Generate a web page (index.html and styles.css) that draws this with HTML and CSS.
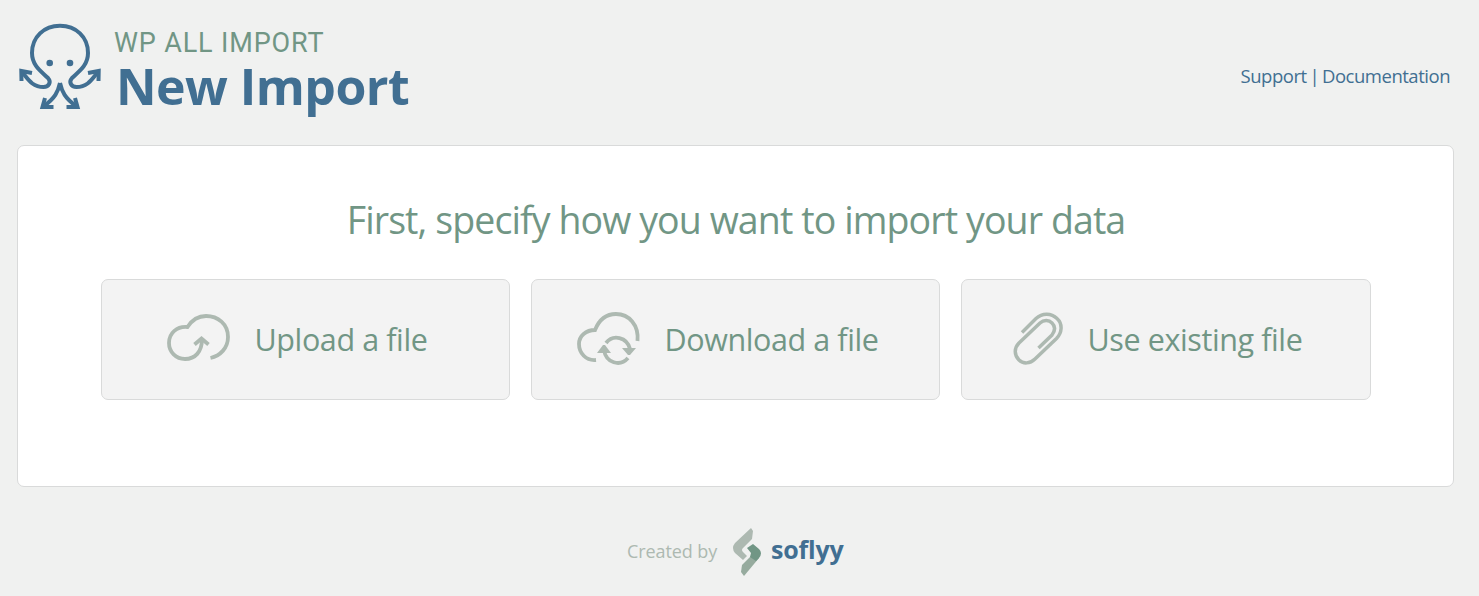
FILE: index.html
```html
<!DOCTYPE html>
<html lang="en">
<head>
<meta charset="utf-8">
<title>New Import</title>
<link rel="stylesheet" href="styles.css">
</head>
<body>
<header class="header">
  <svg class="logo" viewBox="0 0 84 90" fill="none" stroke="#416f92" stroke-width="4">
    <path d="M4 50C10 57 14 65 25.500 65C31 65 33.500 60 30 56C24 50 14 44 14 31C14 15 26 3.800 42 3.800C58 3.800 70 15 70 31C70 44 60 50 54 56C50.500 60 53 65 58.500 65C70 65 74 57 80 50"/>
    <path d="M3.500 59L3.300 49L14 51M70 51L80.700 49L80.500 59"/>
    <path d="M42 61C40 70 37 76 26 84M42 61C44 70 47 76 58 84"/>
    <path d="M27 76L24.500 85H35.500M57 76L59.500 85H48.500"/>
    <circle cx="31.700" cy="41" r="3.300" fill="#416f92" stroke="none"/>
    <circle cx="52" cy="41" r="3.300" fill="#416f92" stroke="none"/>
  </svg>
  <div class="titles">
    <div class="product">WP ALL IMPORT</div>
    <h1 class="title">New Import</h1>
  </div>
  <nav class="links"><a>Support</a> | <a>Documentation</a></nav>
</header>
<main class="card">
  <h2 class="heading">First, specify how you want to import your data</h2>
  <div class="options">
    <div class="option upload">
      <svg class="icon" width="64" height="54" viewBox="0 0 64 54" fill="none" stroke="#adb9b1" stroke-width="3.800">
        <path d="M43.500 46C53 44 61 36 61 25C61 12 51 4 39 4C31 4 25 8 20.500 15C10 14 2 21 2 31C2 40 9 47 18 47C28 47 35 40 35 27"/>
        <path d="M27.500 32.500L34.500 26.500L41.500 32.500"/>
      </svg>
      <span class="label">Upload a file</span>
    </div>
    <div class="option download">
      <svg class="icon" width="64" height="54" viewBox="0 0 64 54" fill="none" stroke="#adb9b1" stroke-width="3.800">
        <path d="M19 48C9 49 2 41 2 32C2 24 9 18 18 18C22 8 29 2 39 2C52 2 62 13 60.500 29"/>
        <path d="M29 31C36 22 50 25 53 37M51 46C43 55 29 51 27 38"/>
        <path d="M45 36H59L53 43H51ZM20 41H34L28 33H26Z" fill="#adb9b1" stroke="none"/>
      </svg>
      <span class="label">Download a file</span>
    </div>
    <div class="option existing">
      <svg class="icon" width="51" height="54" viewBox="0 0 51 54" fill="none" stroke="#adb9b1" stroke-width="3.500">
        <path d="M9 20.500L23 6.500C29 1 38 .500 44 6.500C50 12 49 21 43.500 26.500L22 47C17 52 10 52 6 48C1 43 1 36 6 31L27 11C31 7.500 36 8 39 11C43 15 42 19 39 23L25.500 36"/>
      </svg>
      <span class="label">Use existing file</span>
    </div>
  </div>
</main>
<footer class="footer">
  <span class="created">Created by</span>
  <svg class="mark" width="30" height="48" viewBox="0 0 30 48">
    <path fill="#adb9b1" d="M19 0L21 3L20 11L11 20Q9 22 11 24L15 28L11 32L3 25Q-1 20 3 15Z"/>
    <path fill="#96ab9e" d="M12 48L9 44L10 37L20 27L27 30Z"/>
    <path fill="#719685" d="M15 20L21 16L27 21Q31 25 27 30L24 33L18 29L19 25Z"/>
  </svg>
  <span class="brand">soflyy</span>
</footer>
</body>
</html>
```
FILE: styles.css
```css
* { box-sizing: border-box; }
body {
  margin: 0;
  height: 596px;
  overflow: hidden;
  background: #f0f1f0;
  font-family: "Open Sans", "Noto Sans", sans-serif;
  color: #719685;
}
h1, h2 { margin: 0; }
.header {
  display: flex;
  height: 145px;
  padding: 22px 29px 0 18px;
}
.logo { width: 84px; height: 90px; }
.titles { flex: 1; padding: 7px 0 0 12px; white-space: nowrap; }
.product { font: 27px/28px Roboto, sans-serif; letter-spacing: .85px; }
.title {
  padding-left: 2px;
  font-size: 50px;
  line-height: 58px;
  font-weight: 700;
  letter-spacing: -.55px;
  color: #416f92;
}
.links {
  padding-top: 41px;
  font-size: 18.5px;
  line-height: 26px;
  letter-spacing: -.48px;
  word-spacing: -1.5px;
  color: #416f92;
  white-space: nowrap;
}
.card {
  width: 1437px;
  height: 342px;
  margin-left: 17px;
  padding: 47px 82px 0 83px;
  background: #fff;
  border: 1px solid #d9dada;
  border-radius: 7px;
}
.heading {
  font-size: 37.5px;
  line-height: 54px;
  font-weight: 400;
  letter-spacing: -.9px;
  text-align: center;
  white-space: nowrap;
}
.options { display: grid; grid-template-columns: 409px 409px 410px; gap: 21px; margin-top: 32px; }
.option {
  display: flex;
  align-items: center;
  height: 121px;
  padding-bottom: 2px;
  background: #f3f3f3;
  border: 1px solid #d9dada;
  border-radius: 7px;
  font-size: 30.5px;
  line-height: 42px;
  letter-spacing: -.4px;
  white-space: nowrap;
}
.icon { flex: none; }
.upload { padding-left: 65px; }
.download { padding-left: 45px; }
.existing { padding-left: 51px; }
.label { margin-left: 23.5px; }
.footer { display: flex; align-items: center; padding: 41px 0 0 627px; white-space: nowrap; }
.created { width: 105px; padding-bottom: 2px; font-size: 18px; letter-spacing: -.1px; color: #adb9b1; }
.brand { margin-left: 9px; padding-bottom: 6px; font-size: 25px; font-weight: 700; letter-spacing: -.2px; color: #416f92; }
```
